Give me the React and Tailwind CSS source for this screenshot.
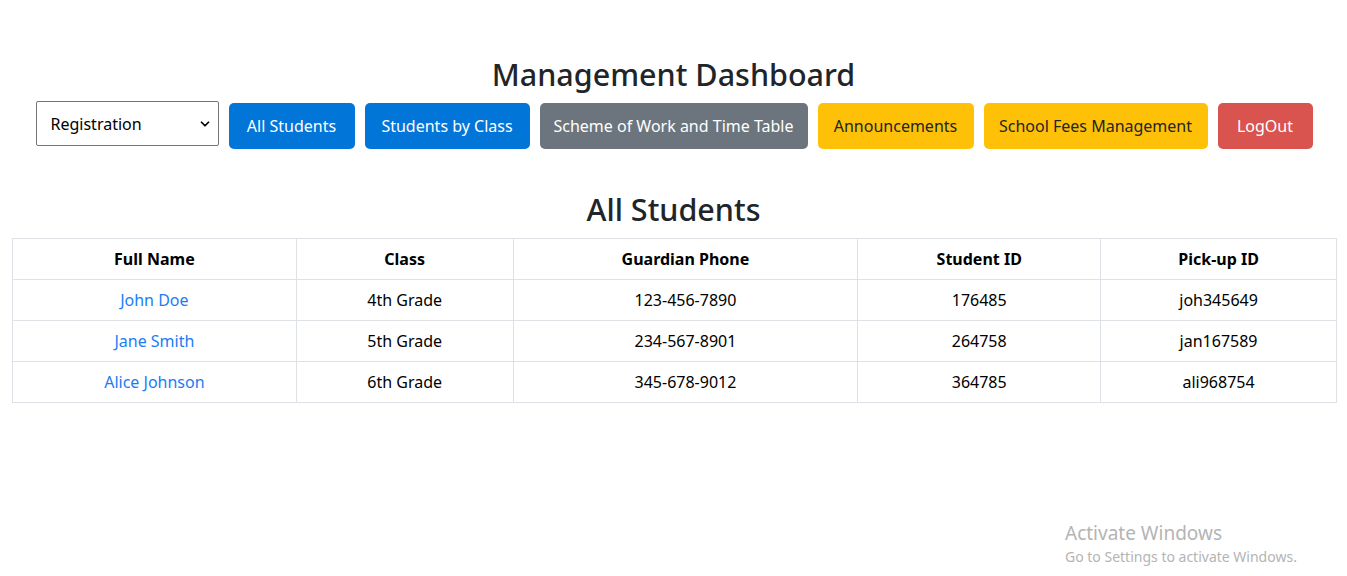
import { ChevronDown } from 'lucide-react'

const buttons = [
  { label: 'All Students',                 w: 'w-[126px]', cls: 'bg-[#0275d8] text-white' },
  { label: 'Students by Class',            w: 'w-[165px]', cls: 'bg-[#0275d8] text-white' },
  { label: 'Scheme of Work and Time Table', w: 'w-[268px]', cls: 'bg-[#6c757d] text-white' },
  { label: 'Announcements',                w: 'w-[156px]', cls: 'bg-[#ffc107] text-[#212529]' },
  { label: 'School Fees Management',       w: 'w-[224px]', cls: 'bg-[#ffc107] text-[#212529]' },
  { label: 'LogOut',                       w: 'w-[95px]',  cls: 'bg-[#d9534f] text-white' },
]

const students = [
  { name: 'John Doe',      grade: '4th Grade', phone: '123-456-7890', id: '176485', pickup: 'joh345649' },
  { name: 'Jane Smith',    grade: '5th Grade', phone: '234-567-8901', id: '264758', pickup: 'jan167589' },
  { name: 'Alice Johnson', grade: '6th Grade', phone: '345-678-9012', id: '364785', pickup: 'ali968754' },
]

const cols = [
  { label: 'Full Name',      w: 'w-[284px]' },
  { label: 'Class',          w: 'w-[217px]' },
  { label: 'Guardian Phone', w: 'w-[345px]' },
  { label: 'Student ID',     w: 'w-[243px]' },
  { label: 'Pick-up ID',     w: 'w-[236px]' },
]

export default function App() {
  return (
    <div className="relative min-h-[576px] bg-white text-[#212529] font-['Segoe_UI','Noto_Sans',sans-serif]">
      <h1 className="pt-[54px] text-center text-[30.5px] leading-[40px] font-medium">Management Dashboard</h1>

      <div className="mt-[7px] flex items-start justify-center gap-[10px] pl-[1px]">
        {/* Registration dropdown */}
        <div className="w-[183px] h-[45px] border border-[#767676] rounded-[2px] flex items-center justify-between pl-[14px] pr-[6px] text-[16px] text-black">
          <span>Registration</span>
          <ChevronDown size={14} strokeWidth={3} />
        </div>
        {buttons.map(b => (
          <button
            key={b.label}
            className={`${b.w} ${b.cls} mt-[2px] h-[46px] rounded-[5px] text-[16px] whitespace-nowrap`}
          >
            {b.label}
          </button>
        ))}
      </div>

      <h2 className="mt-[40px] text-center text-[30.5px] leading-[40px] font-medium">All Students</h2>

      <div className="pl-[12px] pr-[10px] mt-[9px]">
        <table className="w-full border-collapse text-[16px] text-black">
          <thead>
            <tr className="h-[41px]">
              {cols.map(c => (
                <th key={c.label} className={`${c.w} border border-[#dee2e6] font-bold text-center`}>{c.label}</th>
              ))}
            </tr>
          </thead>
          <tbody>
            {students.map(s => (
              <tr key={s.id} className="h-[41px]">
                <td className="border border-[#dee2e6] text-center text-[#1a7cf5]">{s.name}</td>
                <td className="border border-[#dee2e6] text-center">{s.grade}</td>
                <td className="border border-[#dee2e6] text-center">{s.phone}</td>
                <td className="border border-[#dee2e6] text-center">{s.id}</td>
                <td className="border border-[#dee2e6] text-center">{s.pickup}</td>
              </tr>
            ))}
          </tbody>
        </table>
      </div>

      {/* Windows watermark */}
      <div className="absolute left-[1065px] top-[522px] text-[#b4b4b4] leading-tight">
        <div className="text-[19px]">Activate Windows</div>
        <div className="text-[14px] mt-[2px]">Go to Settings to activate Windows.</div>
      </div>
    </div>
  )
}
